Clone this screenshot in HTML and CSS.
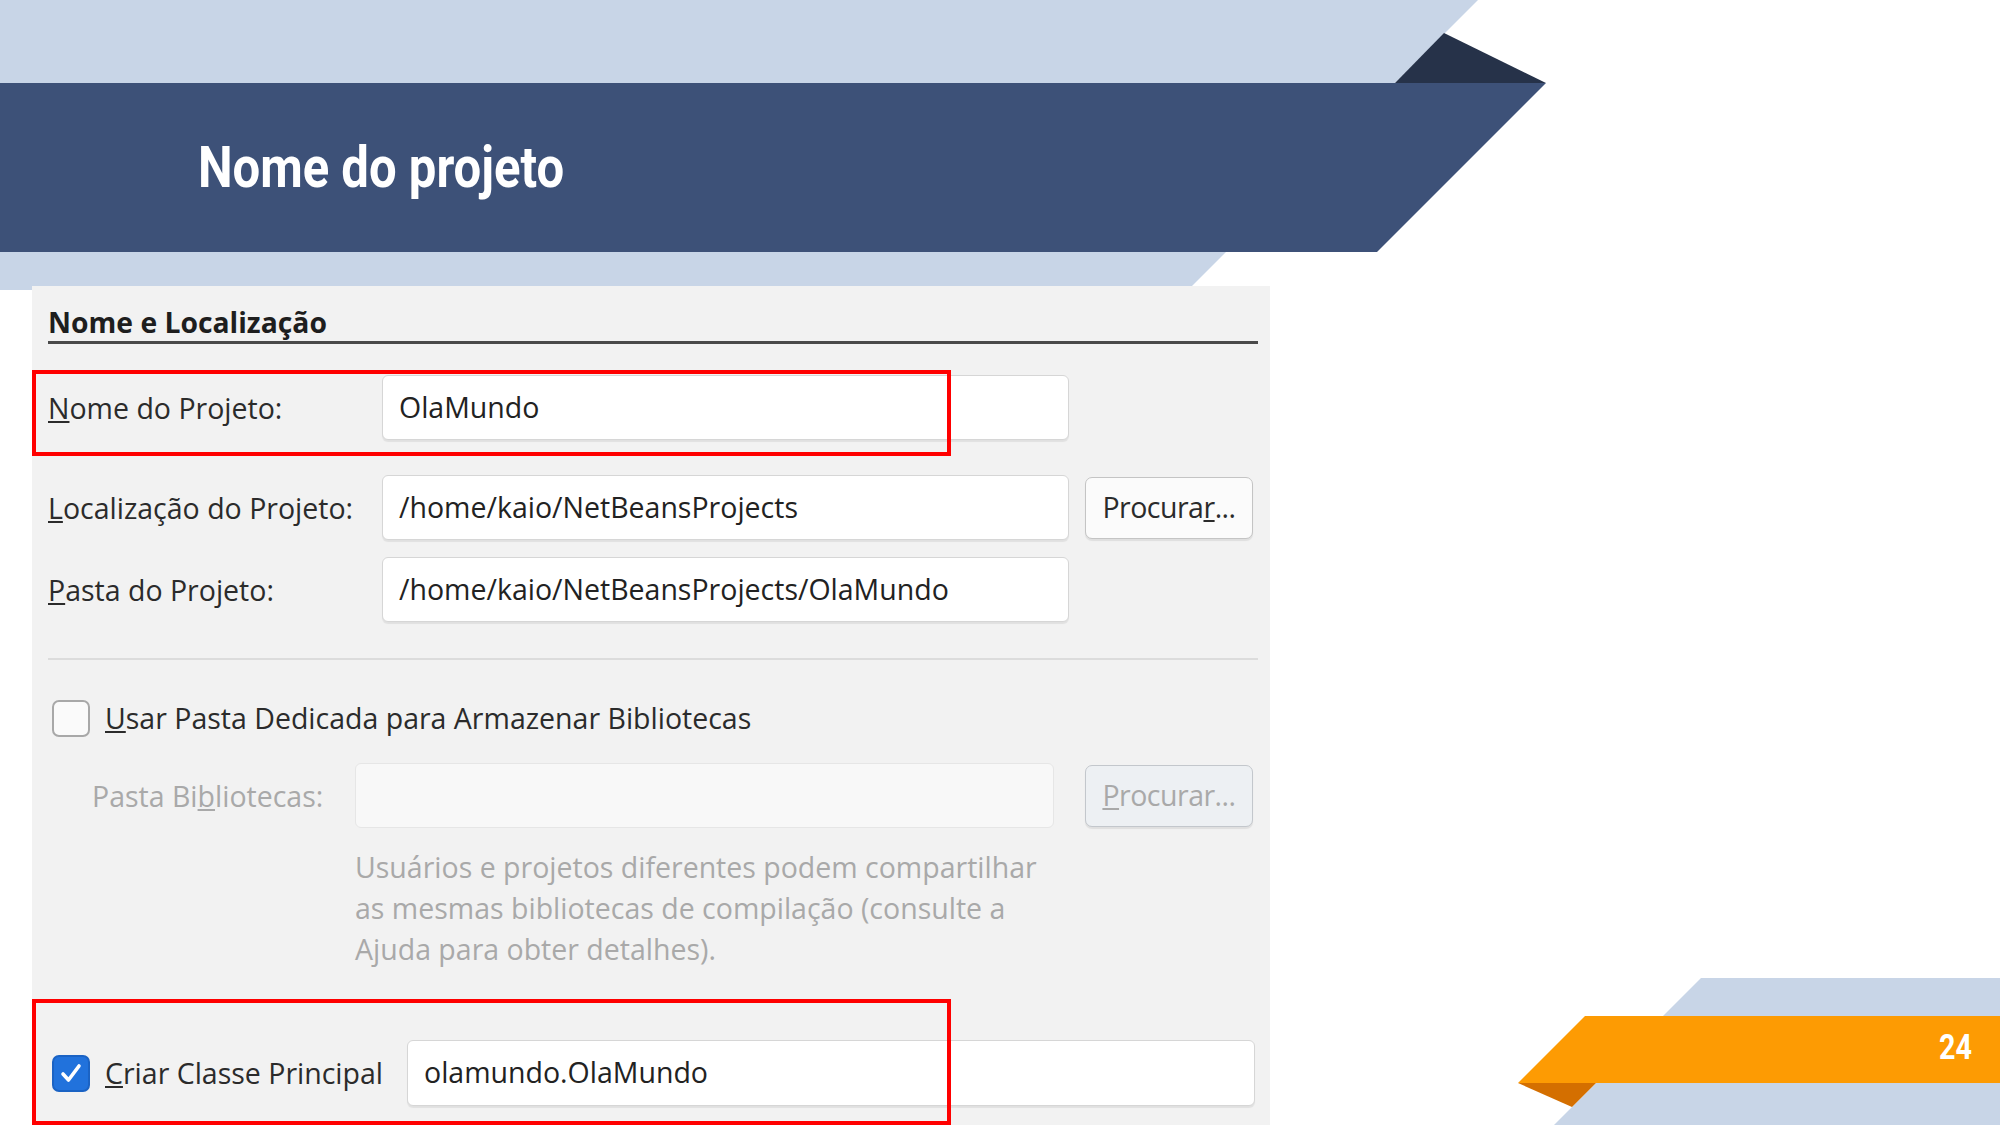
FILE: index.html
```html
<!DOCTYPE html>
<html>
<head>
    <title>Nome do projeto</title>
    <link rel="stylesheet" href="styles.css">
</head>
<body>
<div class="slide">

    <svg class="deco" width="2000" height="1125" viewBox="0 0 2000 1125">
        <polygon points="0,0 1478,0 1188,290 0,290" fill="#c8d5e7"/>
        <polygon points="1444,33 1546,83 1395,83" fill="#263249"/>
        <polygon points="0,83 1546,83 1377,252 0,252" fill="#3d5178"/>
        <polygon points="1701,978 2000,978 2000,1125 1554,1125" fill="#c8d5e7"/>
        <polygon points="1585,1016 2000,1016 2000,1083 1518,1083" fill="#fd9b03"/>
        <polygon points="1518,1083 1596,1083 1572,1107" fill="#d46f00"/>
    </svg>

    <div class="header">
        <div class="band">
            <h1 class="title">Nome do projeto</h1>
        </div>
    </div>

    <div class="panel">
        <div class="section-title">Nome e Localização</div>

        <div class="row row-first">
            <label class="label"><u>N</u>ome do Projeto:</label>
            <div class="field">OlaMundo</div>
        </div>

        <div class="row row-second">
            <label class="label"><u>L</u>ocalização do Projeto:</label>
            <div class="field">/home/kaio/NetBeansProjects</div>
            <div class="btn">Procura<u>r</u>...</div>
        </div>

        <div class="row row-third">
            <label class="label"><u>P</u>asta do Projeto:</label>
            <div class="field">/home/kaio/NetBeansProjects/OlaMundo</div>
        </div>

        <div class="separator"></div>

        <div class="check-row">
            <span class="checkbox"></span>
            <span class="check-label"><u>U</u>sar Pasta Dedicada para Armazenar Bibliotecas</span>
        </div>

        <div class="row row-libs">
            <label class="label disabled">Pasta Bi<u>b</u>liotecas:</label>
            <div class="field field-disabled"></div>
            <div class="btn btn-disabled"><u>P</u>rocurar...</div>
        </div>

        <p class="help">Usuários e projetos diferentes podem compartilhar<br>as mesmas bibliotecas de compilação (consulte a<br>Ajuda para obter detalhes).</p>

        <div class="main-row">
            <span class="checkbox checked">
                <svg width="24" height="22" viewBox="0 0 24 22"><path d="M4 12 L9.5 18 L20 4" fill="none" stroke="#fff" stroke-width="3.6" stroke-linecap="round" stroke-linejoin="round"/></svg>
            </span>
            <span class="check-label"><u>C</u>riar Classe Principal</span>
            <div class="field field-main">olamundo.OlaMundo</div>
        </div>

        <div class="mark mark-one"></div>
        <div class="mark mark-two"></div>
    </div>

    <div class="page-number">24</div>
</div>
</body>
</html>
```

FILE: styles.css
```css
body{
    margin:0;
    background-color:white;
    font-family:"Open Sans", "Noto Sans", sans-serif;
}

.slide{
    position:relative;
    width:2000px;
    height:1125px;
    overflow:hidden;
}

.deco{
    position:absolute;
    left:0;
    top:0;
}

.header{
    position:relative;
    padding-top:83px;
    height:169px;
}

.band{
    height:169px;
    display:flex;
    align-items:center;
    padding-left:198px;
}

.title{
    margin:0;
    font-family:Roboto, "Liberation Sans", sans-serif;
    font-weight:bold;
    font-size:57px;
    color:white;
    transform:scaleX(0.86);
    transform-origin:left center;
}

.panel{
    position:relative;
    box-sizing:border-box;
    margin:34px 0 0 32px;
    width:1238px;
    height:839px;
    background-color:#f2f2f2;
    padding:18px 12px 0 16px;
    color:#2b2b2b;
    font-size:28.5px;
}

.section-title{
    font-weight:bold;
    font-size:28.3px;
    line-height:37px;
    color:#1e1e1e;
    border-bottom:3px solid #4a4a4a;
}

.row{
    display:flex;
    align-items:center;
}

.row-first{
    margin-top:31px;
}

.row-second{
    margin-top:35px;
}

.row-third{
    margin-top:17px;
}

.label{
    width:334px;
    flex-shrink:0;
}

.disabled{
    color:#a9a9a9;
    padding-left:44px;
    width:263px;
}

.field{
    box-sizing:border-box;
    width:687px;
    height:65px;
    background-color:white;
    border:1px solid #d6d6d6;
    border-radius:6px;
    box-shadow:0 2px 1px rgba(0,0,0,0.07);
    padding-left:16px;
    line-height:62px;
    color:#222;
}

.field-disabled{
    width:699px;
    background-color:#f8f8f8;
    border-color:#e6e6e6;
    box-shadow:none;
}

.btn{
    box-sizing:border-box;
    margin-left:16px;
    width:168px;
    height:62px;
    background-color:#fbfbfb;
    border:1px solid #c4c4c4;
    border-radius:7px;
    box-shadow:0 2px 1px rgba(0,0,0,0.08);
    text-align:center;
    line-height:59px;
    color:#2b2b2b;
    letter-spacing:-0.5px;
}

.btn-disabled{
    margin-left:31px;
    background-color:#edf0f3;
    border-color:#c3c7cc;
    color:#a9a9a9;
}

.separator{
    margin-top:36px;
    height:2px;
    background-color:#dcdcdc;
}

.check-row{
    margin-top:39px;
    display:flex;
    align-items:center;
}

.checkbox{
    box-sizing:border-box;
    width:38px;
    height:37px;
    margin-left:4px;
    margin-right:15px;
    border:2px solid #a8a8a8;
    border-radius:7px;
    background-color:#fafafa;
    display:flex;
    align-items:center;
    justify-content:center;
    flex-shrink:0;
}

.checked{
    background-color:#2172dc;
    border-color:#1b63c4;
}

.row-libs{
    margin-top:26px;
}

.help{
    margin:19px 0 0 307px;
    line-height:41px;
    color:#a9a9a9;
}

.main-row{
    margin-top:70px;
    display:flex;
    align-items:center;
}

.field-main{
    margin-left:24px;
    width:848px;
    height:66px;
}

.mark{
    position:absolute;
    left:0;
    width:919px;
    box-sizing:border-box;
    border:4px solid #ff0000;
}

.mark-one{
    top:84px;
    height:86px;
}

.mark-two{
    top:713px;
    height:126px;
}

.page-number{
    position:absolute;
    left:1939px;
    top:1027px;
    font-family:Roboto, "Liberation Sans", sans-serif;
    font-weight:bold;
    font-size:35px;
    color:white;
    transform:scaleX(0.82);
    transform-origin:left center;
}
```
